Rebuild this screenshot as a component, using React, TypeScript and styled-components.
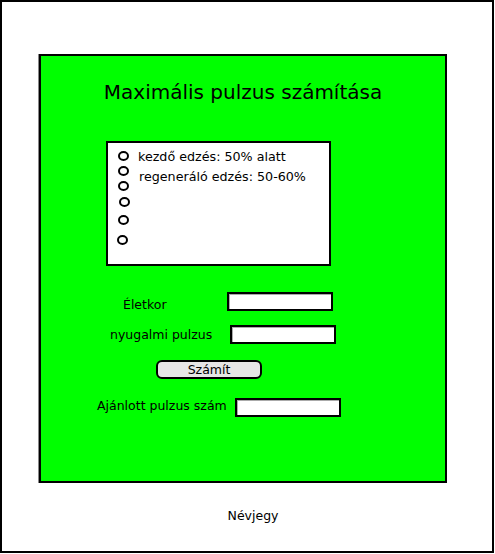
import styled, { createGlobalStyle } from "styled-components";

const GlobalStyle = createGlobalStyle`
  body {
    margin: 0;
    background: #fff;
    font-family: "DejaVu Sans", "Liberation Sans", sans-serif;
    color: #000;
  }
`;

const Frame = styled.div`
  box-sizing: border-box;
  width: 494px;
  height: 553px;
  border: 2px solid #000;
  display: flex;
  flex-direction: column;
`;

const Panel = styled.div`
  box-sizing: border-box;
  width: 408px;
  height: 429px;
  margin: 52px 0 0 37px;
  padding-top: 24px;
  background: #00ff00;
  border: 2px solid #000;
  box-shadow: -1px 0 0 #888;
  display: flex;
  flex-direction: column;
`;

const Title = styled.h1`
  margin: 0;
  font-size: 20px;
  font-weight: normal;
  line-height: 24px;
  text-align: center;
`;

const ListBox = styled.div`
  box-sizing: border-box;
  width: 225px;
  height: 125px;
  margin: 37px 0 0 65px;
  padding-left: 10px;
  background: #fff;
  border: 2px solid #000;
  display: flex;
`;

const Bullets = styled.div`
  display: flex;
  flex-direction: column;
`;

const Bullet = styled.span<{ $top: number; $dx: number }>`
  box-sizing: border-box;
  width: 11px;
  height: 10px;
  margin-top: ${(p) => p.$top}px;
  margin-left: ${(p) => p.$dx}px;
  border: 2px solid #000;
  border-radius: 50%;
`;

const Lines = styled.div`
  padding-top: 4px;
  margin-left: 8px;
  display: flex;
  flex-direction: column;
`;

const Line = styled.div<{ $dx?: number }>`
  font-size: 12.7px;
  line-height: 20px;
  margin-left: ${(p) => p.$dx ?? 0}px;
  white-space: nowrap;
`;

const Form = styled.div`
  display: flex;
  flex-direction: column;
`;

const Row = styled.div<{ $top: number; $indent: number }>`
  display: flex;
  align-items: center;
  height: 19px;
  margin-top: ${(p) => p.$top}px;
  padding-left: ${(p) => p.$indent}px;
`;

const Label = styled.span<{ $width: number; $shift?: number }>`
  width: ${(p) => p.$width}px;
  margin-top: ${(p) => p.$shift ?? 0}px;
  font-size: 12.5px;
  white-space: nowrap;
`;

const Field = styled.input`
  box-sizing: border-box;
  width: 106px;
  height: 19px;
  margin: 0;
  padding: 0 3px;
  background: #fff;
  border: 2px solid #000;
  box-shadow: inset 1px 1px 0 #aaa;
  font: inherit;
  outline: none;
`;

const Button = styled.button`
  box-sizing: border-box;
  width: 106px;
  height: 19px;
  margin: 0;
  padding: 0;
  background: #e6e6e6;
  border: 2px solid #000;
  border-radius: 6px;
  font-family: "DejaVu Sans", sans-serif;
  font-size: 12.5px;
  line-height: 15px;
  color: #000;
`;

const Footer = styled.div`
  margin-top: 25px;
  font-size: 12.5px;
  line-height: 16px;
  text-align: center;
  padding-left: 12px;
`;

const bullets = [
  { top: 8, dx: 0 },
  { top: 5, dx: 0 },
  { top: 5, dx: 0 },
  { top: 6, dx: 1 },
  { top: 8, dx: 0 },
  { top: 10, dx: -1 },
];

const App = () => {
  return (
    <>
      <GlobalStyle />
      <Frame>
        <Panel>
          <Title>Maximális pulzus számítása</Title>
          <ListBox>
            <Bullets>
              {bullets.map((b, i) => (
                <Bullet key={i} $top={b.top} $dx={b.dx} />
              ))}
            </Bullets>
            <Lines>
              <Line>kezdő edzés: 50% alatt</Line>
              <Line $dx={1}>regeneráló edzés: 50-60%</Line>
            </Lines>
          </ListBox>
          <Form>
            <Row $top={26} $indent={82}>
              <Label $width={104} $shift={5}>Életkor</Label>
              <Field />
            </Row>
            <Row $top={14} $indent={69}>
              <Label $width={120}>nyugalmi pulzus</Label>
              <Field />
            </Row>
            <Row $top={16} $indent={115}>
              <Button>Számít</Button>
            </Row>
            <Row $top={19} $indent={56}>
              <Label $width={138} $shift={-5}>Ajánlott pulzus szám</Label>
              <Field />
            </Row>
          </Form>
        </Panel>
        <Footer>Névjegy</Footer>
      </Frame>
    </>
  );
};

export default App;
